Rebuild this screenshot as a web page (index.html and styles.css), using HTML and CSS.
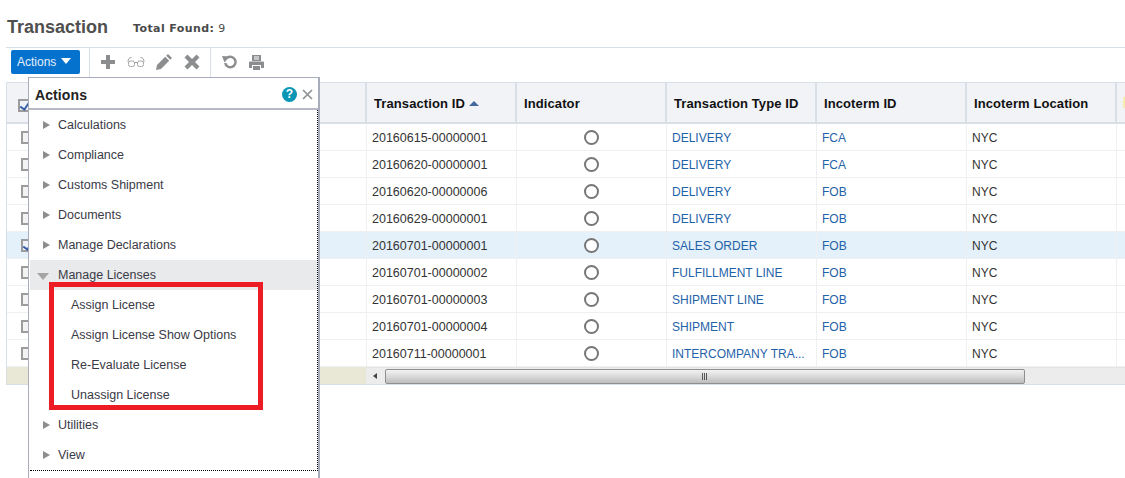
FILE: index.html
```html
<!DOCTYPE html>
<html>
	<head>
		<meta charset="UTF-8">
		<title>Transaction</title>
		<link rel="stylesheet" href="styles.css">
	</head>
	<body>
		<div class="page">
			<div class="titlebar">
				<h1>Transaction</h1>
				<div class="found"><b>Total Found:</b> 9</div>
			</div>
			<div class="toolbar">
				<div class="tb-group tb-first">
					<div class="actions-btn">Actions<i class="btn-caret"></i></div>
				</div>
				<div class="tb-group tb-icons">
					<span class="tool"><svg width="16" height="16" viewBox="0 0 16 16"><path d="M6 1h4v5h5v4h-5v5H6v-5H1V6h5z" fill="#8b8d8f"/></svg></span>
					<span class="tool"><svg width="18" height="12" viewBox="0 0 18 12" fill="none" stroke="#a3a5a7"><rect x="1.500" y="5" width="6" height="5.500" rx="2"/><rect x="10.500" y="5" width="6" height="5.500" rx="2"/><path d="M7.500 6.500h3M1 6q0-4.500 3.500-4.500M17 6q0-4.500-3.500-4.500"/></svg></span>
					<span class="tool"><svg width="18" height="18" viewBox="0 0 18 18"><path d="M13 1l4 4-1.800 1.800-4-4zM10.200 3.800l4 4L6 16l-5 1 1-5z" fill="#8b8d8f"/></svg></span>
					<span class="tool"><svg width="16" height="16" viewBox="0 0 16 16"><path d="M3.500 .5L8 5l4.500-4.500 3 3L11 8l4.500 4.500-3 3L8 11l-4.500 4.500-3-3L5 8 .5 3.500z" fill="#8b8d8f"/></svg></span>
				</div>
				<div class="tb-group tb-icons2">
					<span class="tool"><svg width="16" height="14" viewBox="0 0 16 14" fill="none"><path d="M5 3a5.200 5.200 0 1 1-1.800 5" stroke="#8b8d8f" stroke-width="2.400"/><path d="M0 1l7.500 .5L2.500 7.500z" fill="#8b8d8f"/></svg></span>
					<span class="tool"><svg width="17" height="17" viewBox="0 0 17 17"><path d="M4 1h9v6H4zM1 8.500q0-1 1-1h13q1 0 1 1V14h-3v-3H4v3H1zM5 12h7v4H5z" fill="#8b8d8f"/><path d="M6 3h5M6 5h5" stroke="#fff"/></svg></span>
				</div>
			</div>
			<div class="grid">
				<div class="row head">
					<div class="cell first"><i class="chk on"></i></div>
					<div class="cell">Transaction ID<i class="sort"></i></div>
					<div class="cell">Indicator</div>
					<div class="cell">Transaction Type ID</div>
					<div class="cell">Incoterm ID</div>
					<div class="cell">Incoterm Location</div>
					<div class="cell last"><i class="sliver"></i></div>
				</div>
				<div class="row">
					<div class="cell first"><i class="chk"></i></div>
					<div class="cell tid">20160615-00000001</div>
					<div class="cell radio"><i></i></div>
					<div class="cell"><a>DELIVERY</a></div>
					<div class="cell"><a>FCA</a></div>
					<div class="cell">NYC</div>
					<div class="cell last"></div>
				</div>
				<div class="row">
					<div class="cell first"><i class="chk"></i></div>
					<div class="cell tid">20160620-00000001</div>
					<div class="cell radio"><i></i></div>
					<div class="cell"><a>DELIVERY</a></div>
					<div class="cell"><a>FCA</a></div>
					<div class="cell">NYC</div>
					<div class="cell last"></div>
				</div>
				<div class="row">
					<div class="cell first"><i class="chk"></i></div>
					<div class="cell tid">20160620-00000006</div>
					<div class="cell radio"><i></i></div>
					<div class="cell"><a>DELIVERY</a></div>
					<div class="cell"><a>FOB</a></div>
					<div class="cell">NYC</div>
					<div class="cell last"></div>
				</div>
				<div class="row">
					<div class="cell first"><i class="chk"></i></div>
					<div class="cell tid">20160629-00000001</div>
					<div class="cell radio"><i></i></div>
					<div class="cell"><a>DELIVERY</a></div>
					<div class="cell"><a>FOB</a></div>
					<div class="cell">NYC</div>
					<div class="cell last"></div>
				</div>
				<div class="row picked">
					<div class="cell first"><i class="chk on"></i></div>
					<div class="cell tid">20160701-00000001</div>
					<div class="cell radio"><i></i></div>
					<div class="cell"><a>SALES ORDER</a></div>
					<div class="cell"><a>FOB</a></div>
					<div class="cell">NYC</div>
					<div class="cell last"></div>
				</div>
				<div class="row">
					<div class="cell first"><i class="chk"></i></div>
					<div class="cell tid">20160701-00000002</div>
					<div class="cell radio"><i></i></div>
					<div class="cell"><a>FULFILLMENT LINE</a></div>
					<div class="cell"><a>FOB</a></div>
					<div class="cell">NYC</div>
					<div class="cell last"></div>
				</div>
				<div class="row">
					<div class="cell first"><i class="chk"></i></div>
					<div class="cell tid">20160701-00000003</div>
					<div class="cell radio"><i></i></div>
					<div class="cell"><a>SHIPMENT LINE</a></div>
					<div class="cell"><a>FOB</a></div>
					<div class="cell">NYC</div>
					<div class="cell last"></div>
				</div>
				<div class="row">
					<div class="cell first"><i class="chk"></i></div>
					<div class="cell tid">20160701-00000004</div>
					<div class="cell radio"><i></i></div>
					<div class="cell"><a>SHIPMENT</a></div>
					<div class="cell"><a>FOB</a></div>
					<div class="cell">NYC</div>
					<div class="cell last"></div>
				</div>
				<div class="row">
					<div class="cell first"><i class="chk"></i></div>
					<div class="cell tid">20160711-00000001</div>
					<div class="cell radio"><i></i></div>
					<div class="cell"><a>INTERCOMPANY TRA...</a></div>
					<div class="cell"><a>FOB</a></div>
					<div class="cell">NYC</div>
					<div class="cell last"></div>
				</div>
				<div class="foot">
					<div class="foot-left"></div>
					<div class="scroll">
						<i class="scroll-arrow"></i>
						<div class="thumb"><span class="grip"></span></div>
					</div>
				</div>
			</div>

			<div class="popup">
				<div class="popup-head">
					<span class="popup-title">Actions</span>
					<span class="help">?</span>
					<svg class="close" width="11" height="11" viewBox="0 0 11 11"><path d="M1 1l9 9M10 1l-9 9" stroke="#8f9296" stroke-width="1.700"/></svg>
				</div>
				<ul class="menu">
					<li><i class="tri"></i>Calculations</li>
					<li><i class="tri"></i>Compliance</li>
					<li><i class="tri"></i>Customs Shipment</li>
					<li><i class="tri"></i>Documents</li>
					<li><i class="tri"></i>Manage Declarations</li>
					<li class="open"><i class="tri-down"></i>Manage Licenses</li>
					<li class="sub">Assign License</li>
					<li class="sub">Assign License Show Options</li>
					<li class="sub">Re-Evaluate License</li>
					<li class="sub">Unassign License</li>
					<li><i class="tri"></i>Utilities</li>
					<li><i class="tri"></i>View</li>
				</ul>
			</div>
			<div class="redbox"></div>
		</div>
	</body>
</html>
```

FILE: styles.css
```css
*{margin:0;padding:0;box-sizing:border-box;}
li{list-style:none;}
i{display:block;}
body{background:#fff;font-family:"Liberation Sans",Arial,sans-serif;color:#333;}
.page{position:relative;width:1125px;height:478px;overflow:hidden;}

.titlebar{height:48px;margin-left:6px;border-bottom:1px solid #d9dfe6;display:flex;padding-left:1px;}
.titlebar h1{font-size:18px;line-height:22px;margin-top:16px;color:#4f4f4f;font-weight:bold;width:126px;}
.found{font-family:"DejaVu Sans",sans-serif;font-size:11px;line-height:14px;margin-top:22px;color:#4a4a4a;letter-spacing:.4px;}

.toolbar{height:34px;display:flex;margin-left:6px;}
.tb-group{display:flex;align-items:center;height:32px;}
.tb-first{width:84px;padding:0 0 4px 5px;border-right:1px solid #d9dfe6;}
.actions-btn{width:69px;height:24px;background:#0572ce;border-radius:2px;color:#e4eef8;font-size:12px;line-height:24px;padding-left:6px;display:flex;align-items:center;}
.btn-caret{width:0;height:0;margin-left:5px;margin-top:-2px;border-left:5px solid transparent;border-right:5px solid transparent;border-top:6px solid #fff;}
.tb-icons{padding:0 3px 4px 4px;border-right:1px solid #d9dfe6;width:121px;}
.tb-icons2{padding:0 0 4px 5px;}
.tool{width:27px;display:flex;justify-content:center;align-items:center;}
.tb-icons .tool{width:28px;}

.grid{margin-left:6px;border-top:1px solid #d9dfe6;border-left:1px solid #d9dfe6;border-bottom:1px solid #d9dfe6;}
.row{display:flex;height:27px;border-bottom:1px solid #eef0f2;font-size:12px;}
.cell{width:150px;padding:2px 0 0 5px;display:flex;align-items:center;border-right:1px solid #eef0f2;flex:none;}
.cell.first{width:360px;padding:0 0 0 14px;}
.cell.last{width:8px;border-right:0;padding:0;}
.cell.tid{font-size:12.5px;}
.row a{color:#1f62a8;}
.picked{background:#e4f0fa;}

.head{height:41px;background:#f1f3f7;border-bottom:2px solid #d9dfe6;font-size:13px;font-weight:bold;color:#111;letter-spacing:.1px;}
.head .cell{padding-left:7px;border-right:2px solid #d9dfe6;}
.head .cell.first{padding:5px 0 0 11px;}
.head .cell.last{border-right:0;padding-left:6px;}
.sliver{width:2px;height:11px;background:#f6eeb0;}
.sort{width:0;height:0;margin-left:4px;border-left:5px solid transparent;border-right:5px solid transparent;border-bottom:5px solid #44699c;}

.chk{width:12px;height:13px;border:2px solid #9c9c9c;background:#f3f3f3;}
.chk.on{background:#eef3fa;position:relative;}
.chk.on:after{content:"";position:absolute;left:2px;top:-1px;width:4px;height:8px;border-right:2px solid #3b5ea6;border-bottom:2px solid #3b5ea6;transform:rotate(35deg);}

.cell.radio{padding:0;justify-content:center;}
.radio i{width:15px;height:15px;border:2px solid #777;border-radius:50%;background:#fff;}

.foot{display:flex;height:17px;}
.foot-left{width:359px;background:#e9e8d6;}
.scroll{flex:1;background:#ececec;display:flex;align-items:center;border-top:1px solid #e4e4e4;}
.scroll-arrow{width:0;height:0;margin-left:7px;border-top:3px solid transparent;border-bottom:3px solid transparent;border-right:4px solid #444;}
.thumb{width:640px;height:15px;margin-left:8px;border:1px solid #8f8f8f;border-radius:2px;background:linear-gradient(#f2f2f2,#dcdcdc 45%,#bdbdbd);display:flex;justify-content:center;align-items:center;}
.grip{width:5px;height:7px;margin-right:2px;border-left:1px solid #555;border-right:1px solid #555;position:relative;}
.grip:after{content:"";position:absolute;left:1px;top:0;width:1px;height:7px;background:#555;}

/* popup lies over the table */
.popup{position:absolute;left:28px;top:77px;width:292px;height:410px;background:#fff;border:1px solid #a9acba;border-right-width:2px;}
.popup-head{height:32px;padding:2px 0 0 6px;border-bottom:2px solid #b7bac6;display:flex;align-items:center;}
.popup-title{font-size:14px;font-weight:bold;color:#222;width:247px;letter-spacing:.1px;padding-top:2px;}
.help{width:15px;height:15px;border-radius:50%;background:#0b96b5;color:#fff;font-size:12px;font-weight:bold;line-height:15px;text-align:center;}
.close{margin-left:5px;}
.menu{margin-left:1px;width:288px;border-right:1px dotted #000;border-bottom:1px dotted #000;font-size:12.5px;color:#3a3a46;}
.menu li{height:30px;display:flex;align-items:center;padding-left:28px;}
.menu li.open{background:#e9eaec;}
.menu li.sub{padding-left:41px;}
.tri{width:0;height:0;margin-left:-15px;margin-right:8px;border-top:4px solid transparent;border-bottom:4px solid transparent;border-left:7px solid #8d8d8d;}
.tri-down{width:0;height:0;margin-left:-21px;margin-right:9px;margin-top:3px;border-left:6px solid transparent;border-right:6px solid transparent;border-top:7px solid #a5a5a5;}

.redbox{position:absolute;left:49px;top:282px;width:214px;height:128px;border:5px solid #ed1c24;}
```
